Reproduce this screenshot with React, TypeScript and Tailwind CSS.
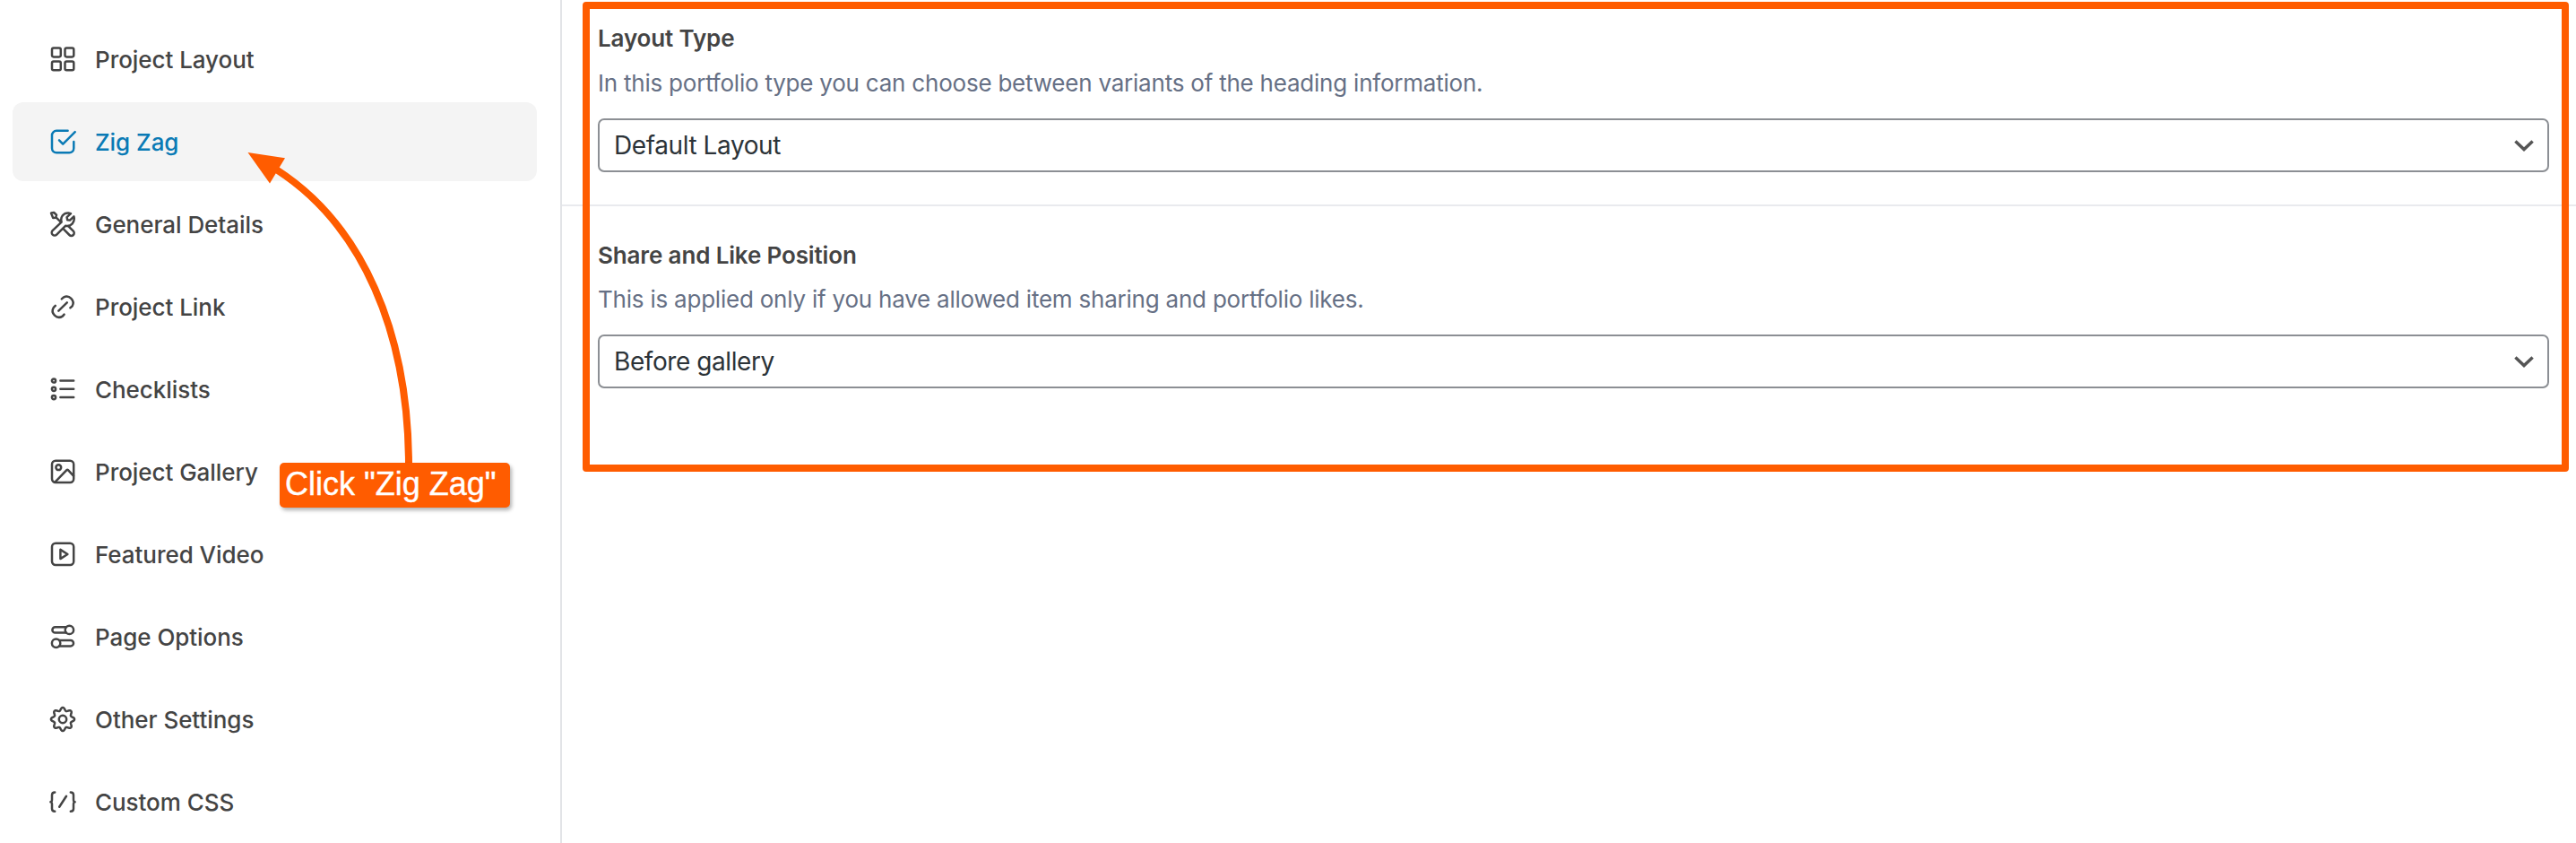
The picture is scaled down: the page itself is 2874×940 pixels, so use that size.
import type { ReactNode } from "react";

const gearPath =
  Array.from({ length: 97 }, (_, i) => {
    const a = (i / 96) * Math.PI * 2;
    const r = 11.4 + 1.7 * Math.cos(8 * a);
    return `${i === 0 ? "M" : "L"}${(16 + r * Math.cos(a)).toFixed(2)} ${(16 + r * Math.sin(a)).toFixed(2)}`;
  }).join("") + "Z";

function Icon({ children }: { children: ReactNode }) {
  return (
    <svg
      viewBox="0 0 32 32"
      className="size-8 shrink-0"
      fill="none"
      stroke="currentColor"
      strokeWidth="2.5"
      strokeLinecap="round"
      strokeLinejoin="round"
    >
      {children}
    </svg>
  );
}

const items: { label: string; active?: boolean; icon: ReactNode }[] = [
  {
    label: "Project Layout",
    icon: (
      <>
        <rect x="4" y="3.6" width="9.8" height="9.8" rx="1.8" />
        <rect x="18.5" y="3.6" width="9.8" height="9.8" rx="1.8" />
        <rect x="4" y="18.4" width="9.8" height="9.8" rx="1.8" />
        <rect x="18.5" y="18.4" width="9.8" height="9.8" rx="1.8" />
      </>
    ),
  },
  {
    label: "Zig Zag",
    active: true,
    icon: (
      <>
        <path d="M21.6 3.8H9a5 5 0 0 0-5 5V23.3a5 5 0 0 0 5 5H23.3a5 5 0 0 0 5-5V16" />
        <path d="M12 14.4L16.2 18.7L29.7 5.2" />
      </>
    ),
  },
  {
    label: "General Details",
    icon: (
      <>
        <path d="M4.6 23.2L14.6 13.6C13 8 17 3.2 22.2 3.4L25 4.2L20.6 8.2L21.2 11.2L24 11.6L28.4 7.4C30 13.5 25.5 19 19 17.8L9.2 27.6A3.15 3.15 0 0 1 4.6 23.2Z" />
        <path d="M3 3.6L6.2 3L9 5.6L8.2 8.8L5.2 9L3 3.6ZM8.2 8.2L13.4 13.2" />
        <path d="M22.2 18.2L27.8 23.6A3 3 0 0 1 23.4 28L16.6 21.2" />
      </>
    ),
  },
  {
    label: "Project Link",
    icon: (
      <>
        <path d="M14.8 7.4L16.8 5.6A7.2 7.2 0 0 1 26.600 15.400L24.400 17.200" />
        <path d="M7.800 14.800L5.800 16.800A7.200 7.200 0 0 0 15.800 26.600L17.600 24.600" />
        <path d="M11.300 20.700L20.800 11.300" />
      </>
    ),
  },
  {
    label: "Checklists",
    icon: (
      <>
        <circle cx="6" cy="6.5" r="2.1" />
        <circle cx="6" cy="15.8" r="2.1" />
        <circle cx="6" cy="25.1" r="2.1" />
        <path d="M13.4 6.5H28.2M13.4 15.8H28.2M13.4 25.1H28.2" />
      </>
    ),
  },
  {
    label: "Project Gallery",
    icon: (
      <>
        <rect x="4" y="3.8" width="24.2" height="24.2" rx="4" />
        <circle cx="11.3" cy="11.2" r="2.9" />
        <path d="M7.6 27.4L20.4 14.2Q21.2 13.4 22 14.2L28 20.6" />
      </>
    ),
  },
  {
    label: "Featured Video",
    icon: (
      <>
        <rect x="4" y="3.8" width="24.2" height="24.2" rx="4" />
        <path d="M13.4 10.9V21.1L21.4 16L13.4 10.9Z" />
      </>
    ),
  },
  {
    label: "Page Options",
    icon: (
      <>
        <circle cx="23.4" cy="8.4" r="4.7" />
        <path d="M20 5.2H7.6a3.2 3.2 0 0 0 0 6.4H20" />
        <circle cx="8.6" cy="23.2" r="4.7" />
        <path d="M12 20H24.8a3.2 3.2 0 0 1 0 6.4H12" />
      </>
    ),
  },
  {
    label: "Other Settings",
    icon: (
      <>
        <path d={gearPath} />
        <circle cx="16" cy="16" r="4.2" />
      </>
    ),
  },
  {
    label: "Custom CSS",
    icon: (
      <>
        <path d="M7.2 5.4Q4 5.4 4 8.4V13.6Q4 16.2 2.4 16.2Q4 16.2 4 18.8V23.8Q4 26.8 7.2 26.8" />
        <path d="M24.8 5.4Q28 5.4 28 8.4V13.6Q28 16.2 29.6 16.2Q28 16.2 28 18.8V23.8Q28 26.8 24.8 26.8" />
        <path d="M12.2 21.8L20 9.8" />
      </>
    ),
  },
];

function Field({ title, text, textClass, value }: {
  title: string; text: string; textClass: string; value: string;
}) {
  return (
    <div className="pr-[30px] pl-10">
      <h3 className="text-[26px] leading-8 font-semibold tracking-[-0.14px] text-[#444]">{title}</h3>
      <p className={`text-[26px] leading-8 tracking-[-0.22px] text-[#667085] ${textClass}`}>{text}</p>
      <div className="mt-[23px] flex h-[60px] items-center justify-between rounded-[7px] border-2 border-[#8c8f94] pr-[14px] pl-4 text-[#2c3338]">
        <span className="text-[28px] leading-8 tracking-[-0.42px]">{value}</span>
        <svg viewBox="0 0 24 14" className="h-[14px] w-6" fill="none" stroke="#555" strokeWidth="3.4">
          <path d="M2.4 2.400L12 11.600L21.600 2.400" />
        </svg>
      </div>
    </div>
  );
}

export default function App() {
  return (
    <div className="relative flex h-[940px] w-[2874px] overflow-hidden bg-white font-['Inter',sans-serif]">
      <nav className="flex w-[627px] shrink-0 flex-col gap-1 border-r-2 border-[#e2e4e7] pt-[22px] pr-[26px] pl-[14px]">
        {items.map((item) => (
          <a
            key={item.label}
            className={`flex h-[88px] shrink-0 items-center gap-5 rounded-xl pl-10 text-[26px] font-[550] tracking-[-0.05px] ${item.active ? "bg-[#f4f4f4] text-[#0a7ab5]" : "text-[#444]"}`}
          >
            <Icon>{item.icon}</Icon>
            <span className="pt-[2px] leading-8">{item.label}</span>
          </a>
        ))}
      </nav>
      <main className="flex-1">
        <section className="h-[230px] border-b-2 border-[#e9eaee] pt-[27px]">
          <Field
            title="Layout Type"
            text="In this portfolio type you can choose between variants of the heading information."
            textClass="mt-[18px]"
            value="Default Layout"
          />
        </section>
        <section className="pt-[39px]">
          <Field
            title="Share and Like Position"
            text="This is applied only if you have allowed item sharing and portfolio likes."
            textClass="mt-[17px]"
            value="Before gallery"
          />
        </section>
      </main>

      <div className="absolute top-[2px] left-[650px] h-[524px] w-[2216px] rounded-[4px] border-8 border-[#ff5c00]" />
      <svg className="absolute top-0 left-0 h-[600px] w-[600px]" viewBox="0 0 600 600" fill="none">
        <path d="M456 520C456 370 404 251 309 189.500" stroke="#ff5c00" strokeWidth="8" />
        <path d="M276.500 170L318 176.300L301 204.500Z" fill="#ff5c00" />
      </svg>
      <div className="absolute top-[516px] left-[312px] flex h-[50px] w-[257px] items-center rounded-[5px] bg-[#ff5c00] pb-[2px] pl-[6px] font-['Liberation_Sans',Arial,sans-serif] text-[36px] leading-none whitespace-nowrap text-white shadow-[2px_3px_4px_rgba(0,0,0,0.3)] [-webkit-text-stroke:0.4px_white]">
        Click "Zig Zag"
      </div>
    </div>
  );
}
